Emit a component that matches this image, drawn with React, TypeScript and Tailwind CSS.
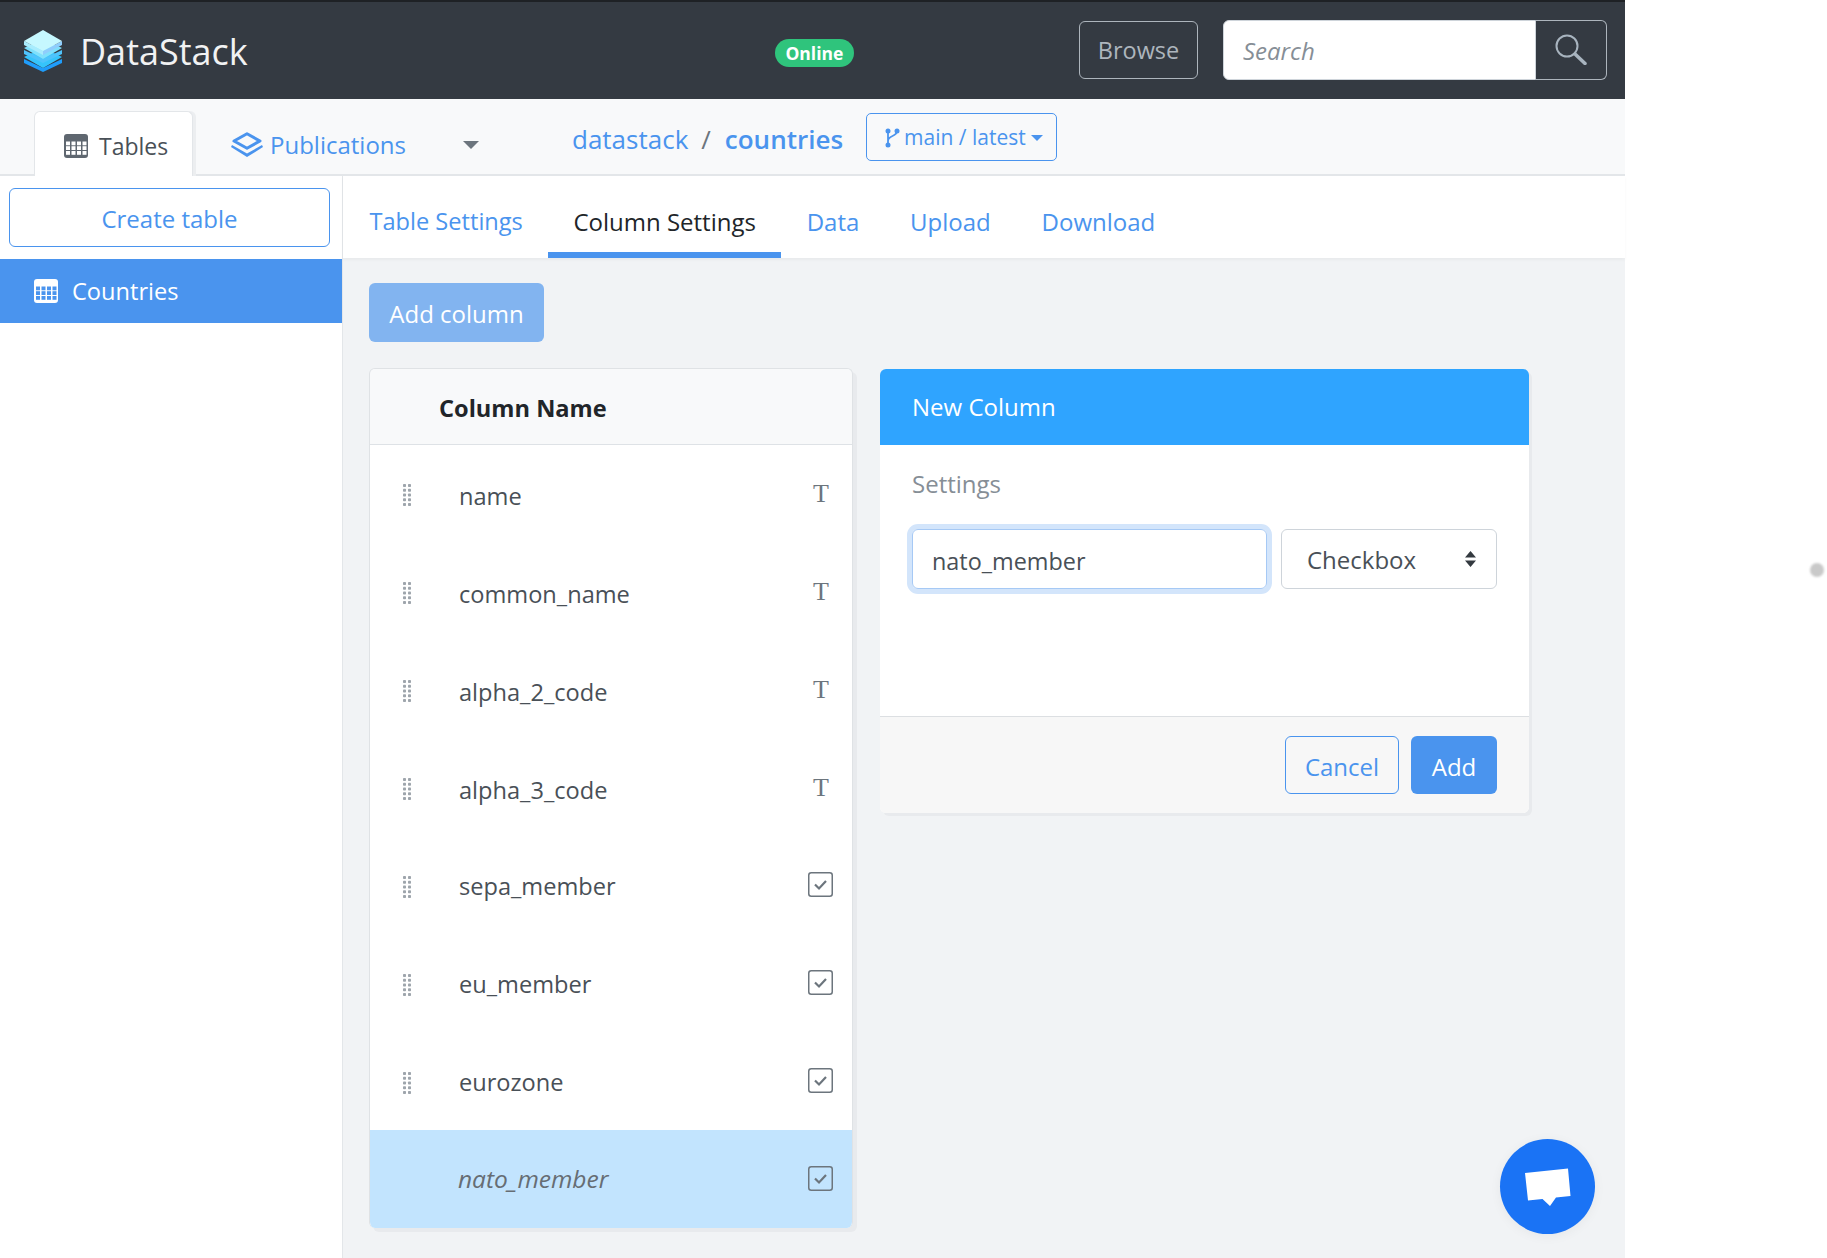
const COLUMNS = [
  { name: "name", kind: "text" },
  { name: "common_name", kind: "text" },
  { name: "alpha_2_code", kind: "text" },
  { name: "alpha_3_code", kind: "text" },
  { name: "sepa_member", kind: "check" },
  { name: "eu_member", kind: "check" },
  { name: "eurozone", kind: "check" },
];

function Logo() {
  return (
    <svg width="38" height="42" viewBox="0 0 38 42" className="shrink-0">
      <path d="M0 29l19 9 19-9v4L19 42 0 33z" fill="#1f9dfb" />
      <path d="M0 27l19-9 19 9-19 11z" fill="#35c4fb" />
      <path d="M0 20l19 9 19-9v4L19 33 0 24z" fill="#4fc3fb" />
      <path d="M0 18l19-9 19 9-19 11z" fill="#7fe0fc" />
      <path d="M0 11l19 10v4L0 15z" fill="#a9ecfd" />
      <path d="M38 11L19 21v4l19-10z" fill="#8fcdfc" />
      <path d="M19 0l19 11-19 10L0 11z" fill="#c6f8ff" />
    </svg>
  );
}

function TableIcon({ frame, cell }: { frame: string; cell: string }) {
  const xs = [2, 7.5, 13, 18.5];
  const ys = [7.5, 12.2, 17];
  return (
    <svg width="24" height="24" viewBox="0 0 24 24" className="shrink-0">
      <rect width="24" height="24" rx="3" fill={frame} />
      {ys.map((y) =>
        xs.map((x) => <rect key={`${x}-${y}`} x={x} y={y} width="4" height="3.8" fill={cell} />),
      )}
    </svg>
  );
}

function LayersIcon() {
  return (
    <svg width="32" height="25" viewBox="0 0 32 25" className="shrink-0">
      <path d="M16 1.8L29 9 16 16.2 3 9z" fill="none" stroke="#4a94ee" strokeWidth="3" strokeLinejoin="round" />
      <path d="M1 13l15 8.5 15-8.5 1 2L16 25 0 15z" fill="#4a94ee" />
    </svg>
  );
}

function BranchIcon() {
  return (
    <svg width="15" height="20" viewBox="0 0 15 20" className="shrink-0">
      <path d="M3 3v14M12 3c0 6-9 4-9 10" fill="none" stroke="#4a94ee" strokeWidth="1.8" />
      <circle cx="3" cy="3" r="2.5" fill="#4a94ee" />
      <circle cx="12" cy="3" r="2.5" fill="#4a94ee" />
      <circle cx="3" cy="17" r="2.5" fill="#4a94ee" />
    </svg>
  );
}

function SearchIcon() {
  return (
    <svg width="32" height="31" viewBox="0 0 32 31">
      <circle cx="12" cy="12" r="10.5" fill="none" stroke="#a8b4bf" strokeWidth="2" />
      <path d="M20 20l10 9.5" stroke="#a8b4bf" strokeWidth="3.5" strokeLinecap="round" />
    </svg>
  );
}

function Grip() {
  const rows = [0, 4.75, 9.5, 14.25, 19];
  return (
    <svg width="8" height="22" viewBox="0 0 8 22" className="mt-[3px] shrink-0">
      {rows.map((y) => (
        <g key={y} fill="#9ea5ac">
          <rect x="0" y={y} width="3" height="3" rx="0.8" />
          <rect x="5" y={y} width="3" height="3" rx="0.8" />
        </g>
      ))}
    </svg>
  );
}

function CheckIcon() {
  return (
    <svg width="25" height="25" viewBox="0 0 25 25" className="shrink-0">
      <rect x="0.75" y="0.75" width="23.5" height="23.5" rx="2.5" fill="none" stroke="#6c757d" strokeWidth="1.5" />
      <path d="M7 12.5l4 4 7-7.5" fill="none" stroke="#6c757d" strokeWidth="2.2" />
    </svg>
  );
}

function ColumnRow({ name, kind, active }: { name: string; kind: string; active?: boolean }) {
  return (
    <div className={`flex h-[98px] items-center pr-[19px] ${active ? "bg-[#c2e4fe] pl-[88px]" : "pl-[33px]"}`}>
      {!active && <Grip />}
      <span
        className={`flex-1 ${
          active
            ? "text-[24.5px] italic text-[#666d74]"
            : `ml-[48px] text-[23.6px] text-[#495057] ${kind === "text" ? "pt-[7px]" : "pt-[3px]"}`
        }`}
      >
        {name}
      </span>
      {kind === "text" ? (
        <span className="mr-[4px] pt-[2px] font-['Liberation_Serif',serif] text-[26px] leading-none text-[#6c757d]">T</span>
      ) : (
        <span className="-mt-[2px]"><CheckIcon /></span>
      )}
    </div>
  );
}

export default function App() {
  return (
    <div className="relative h-[1258px] w-[1827px] overflow-hidden bg-white font-['Open_Sans',sans-serif] text-[24px] text-[#212529]">
      <div className="flex h-[1258px] w-[1625px] flex-col">
        {/* Top bar */}
        <header className="flex h-[99px] shrink-0 items-center border-t-2 border-[#1e2125] bg-[#343a42] pl-[24px] pr-[18px]">
          <Logo />
          <span className="ml-[18px] pt-[2px] text-[36px] text-[#f1f2f3]">DataStack</span>
          <span className="ml-[527px] mt-[5px] flex h-[28px] w-[80px] items-center justify-center rounded-full bg-[#2fc47c] text-[17.5px] font-bold text-white">Online</span>
          <button className="ml-[225px] -mt-[2px] h-[58px] w-[120px] rounded-[6px] border border-[#adb5bd] pt-[3px] text-[23.5px] text-[#adb5bd]">Browse</button>
          <div className="ml-[25px] -mt-[2px] flex h-[60px]">
            <input
              placeholder="Search"
              readOnly
              className="h-full w-[313px] rounded-l-[6px] border border-[#ced4da] bg-white pl-[19px] pt-[2px] italic outline-none placeholder:text-[#868e96]"
            />
            <button className="flex h-full w-[71px] items-center justify-center rounded-r-[6px] border border-l-0 border-[#adb5bd]">
              <SearchIcon />
            </button>
          </div>
        </header>

        {/* Sub nav */}
        <nav className="flex h-[77px] shrink-0 items-end border-b-2 border-[#e3e6e9] bg-[#f8f9fa]">
          <div className="ml-[34px] -mb-[2px] flex h-[65px] w-[159px] items-center rounded-t-[6px] border border-b-0 border-[#e3e6e9] bg-white pl-[29px] pt-[3px] text-[23px] text-[#495057] shadow-[3px_0_0_#eceef0]">
            <TableIcon frame="#5f6770" cell="#ffffff" />
            <span className="ml-[11px] pt-[2px]">Tables</span>
          </div>
          <div className="ml-[38px] flex h-[63px] items-center pt-[4px] text-[#4a94ee]">
            <LayersIcon />
            <span className="ml-[7px]">Publications</span>
          </div>
          <div className="ml-[57px] mb-[25px] h-0 w-0 border-x-[8px] border-t-[8px] border-x-transparent border-t-[#6c757d]" />
          <div className="mb-[15px] ml-[93px] flex items-center self-end text-[26px]">
            <span className="text-[#4a94ee]">datastack</span>
            <span className="ml-[13px] text-[#6c757d]">/</span>
            <span className="ml-[14px] font-semibold text-[#4a94ee]">countries</span>
          </div>
          <button className="mb-[13px] ml-[23px] flex h-[48px] w-[191px] items-center rounded-[5px] border border-[#4a94ee] pl-[18px] pt-[2px] text-[21px] text-[#4a94ee]">
            <BranchIcon />
            <span className="ml-[4px]">main / latest</span>
            <span className="ml-[5px] h-0 w-0 border-x-[6px] border-t-[6px] border-x-transparent border-t-[#4a94ee]" />
          </button>
        </nav>

        <div className="flex min-h-0 flex-1">
          {/* Sidebar */}
          <aside className="w-[343px] shrink-0 border-r border-[#e3e6e9] bg-white">
            <div className="flex h-[83px] items-start pl-[9px] pt-[12px]">
              <button className="h-[59px] w-[321px] rounded-[6px] border border-[#4a94ee] pt-[3px] text-[#4a94ee]">Create table</button>
            </div>
            <div className="flex h-[64px] items-center bg-[#4a94ee] pl-[34px] text-[23.6px] text-white">
              <TableIcon frame="#ffffff" cell="#4a94ee" />
              <span className="ml-[14px] pt-[2px]">Countries</span>
            </div>
          </aside>

          <main className="flex min-w-0 flex-1 flex-col bg-[#f1f3f5]">
            {/* Tabs */}
            <div className="flex h-[82px] shrink-0 items-stretch bg-white pl-[1px] shadow-[0_2px_3px_rgba(0,0,0,0.04)]">
              <div className="flex w-[204px] items-center border-b-[6px] border-transparent pl-[25.5px] pt-[16px] text-[23.6px] text-[#4a94ee]">Table Settings</div>
              {["Column Settings", "Data", "Upload", "Download"].map((t) => (
                <div
                  key={t}
                  className={`flex items-center px-[25.4px] pt-[15px] ${t === "Column Settings" ? "border-b-[6px] border-[#4a94ee] text-[#212529]" : "border-b-[6px] border-transparent text-[#4a94ee]"}`}
                >
                  {t}
                </div>
              ))}
            </div>

            <div className="px-[26px] pt-[25px]">
              <button className="h-[59px] w-[175px] rounded-[6px] bg-[#82b4f0] pt-[2px] text-white">Add column</button>

              <div className="mt-[26px] flex items-start">
                {/* Column list */}
                <div className="w-[484px] overflow-hidden rounded-[6px] border border-b-0 border-[#dfe2e5] shadow-[4px_4px_0_#e8eaed]">
                  <div className="relative z-10 flex h-[75px] items-center bg-[#f8f9fa] pl-[69px] pt-[4px] text-[23.6px] font-bold shadow-[0_1px_0_#dee2e6]">Column Name</div>
                  <div className="bg-white">
                    {COLUMNS.map((c) => (
                      <ColumnRow key={c.name} name={c.name} kind={c.kind} />
                    ))}
                    <ColumnRow name="nato_member" kind="check" active />
                  </div>
                </div>

                {/* New column card */}
                <div className="ml-[27px] mt-[1px] w-[649px] overflow-hidden rounded-[6px] bg-white shadow-[3px_3px_0_#e8eaed]">
                  <div className="flex h-[76px] items-center bg-[#2fa4ff] pl-[32px] text-white">New Column</div>
                  <div className="h-[272px] border-b border-[#dcdfe2] px-[32px] pt-[21px]">
                    <div className="text-[#868e96]">Settings</div>
                    <div className="mt-[27px] flex">
                      <input
                        value="nato_member"
                        readOnly
                        className="h-[60px] w-[355px] rounded-[6px] border border-[#a6c9f5] pl-[19px] pt-[4px] text-[23.4px] text-[#495057] shadow-[0_0_0_5px_#d3e5fb] outline-none"
                      />
                      <div className="relative ml-[14px]">
                        <select className="h-[60px] w-[216px] appearance-none rounded-[6px] border border-[#ced4da] bg-white pl-[25px] pt-[2px] text-[#495057] outline-none">
                          <option>Checkbox</option>
                        </select>
                        <svg width="11" height="16" viewBox="0 0 11 16" className="pointer-events-none absolute right-[21px] top-[22px]">
                          <path d="M5.5 0L11 6.5H0z M0 9.5h11L5.5 16z" fill="#343a40" />
                        </svg>
                      </div>
                    </div>
                  </div>
                  <div className="flex h-[96px] items-center justify-end bg-[#f7f7f7] pr-[32px]">
                    <button className="h-[58px] w-[114px] rounded-[6px] border border-[#4a94ee] pt-[3px] text-[#4a94ee]">Cancel</button>
                    <button className="ml-[12px] h-[58px] w-[86px] rounded-[6px] bg-[#4a94ee] pt-[3px] text-white">Add</button>
                  </div>
                </div>
              </div>
            </div>
          </main>
        </div>
      </div>

      {/* Chat bubble */}
      <div className="absolute left-[1500px] top-[1139px] flex h-[95px] w-[95px] items-center justify-center rounded-full bg-[#1a73f5] shadow-[0_2px_12px_rgba(0,0,0,0.05)]">
        <svg width="46" height="38" viewBox="0 0 46 38">
          <path d="M0 5L43 0.5 45.5 28 31 29.5 25 38 17.5 31 3 32.5z" fill="#fff" />
        </svg>
      </div>
      <div className="absolute left-[1810px] top-[563px] h-[14px] w-[14px] rounded-full bg-[#c9c9c9] blur-[1px]" />
    </div>
  );
}
